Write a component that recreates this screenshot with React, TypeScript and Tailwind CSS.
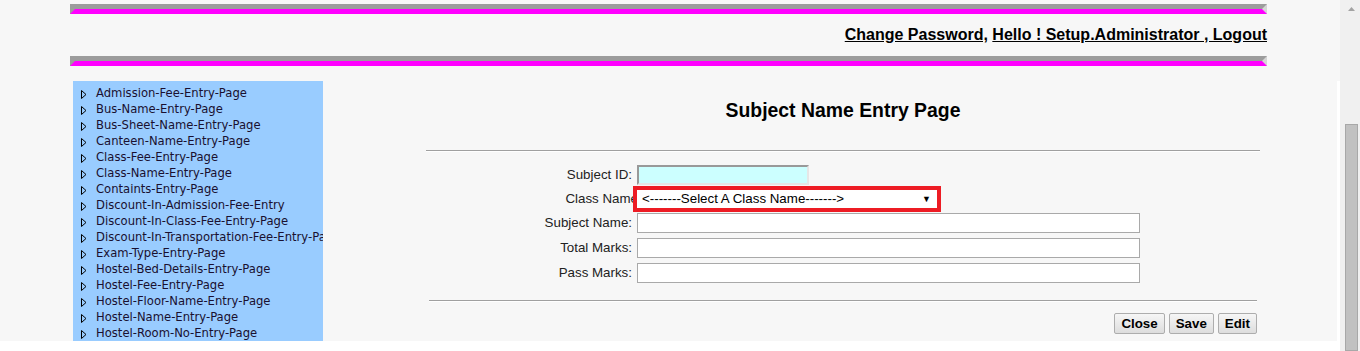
import React from 'react';

const menuItems = [
  'Admission-Fee-Entry-Page',
  'Bus-Name-Entry-Page',
  'Bus-Sheet-Name-Entry-Page',
  'Canteen-Name-Entry-Page',
  'Class-Fee-Entry-Page',
  'Class-Name-Entry-Page',
  'Containts-Entry-Page',
  'Discount-In-Admission-Fee-Entry',
  'Discount-In-Class-Fee-Entry-Page',
  'Discount-In-Transportation-Fee-Entry-Page',
  'Exam-Type-Entry-Page',
  'Hostel-Bed-Details-Entry-Page',
  'Hostel-Fee-Entry-Page',
  'Hostel-Floor-Name-Entry-Page',
  'Hostel-Name-Entry-Page',
  'Hostel-Room-No-Entry-Page',
];

function Bar() {
  return (
    <div className="h-[10px] border-t-[5px] border-l-[5px] border-r-[5px] border-b-[5px] border-t-[#9c9c9c] border-l-[#9c9c9c] border-r-[#d6d6d6] border-b-[#ff00ff]" />
  );
}

function Arrow() {
  return (
    <svg width="6" height="9" viewBox="0 0 6 9" className="shrink-0">
      <path d="M0.5 0.5 L5 4.5 L0.5 8.5 Z" fill="none" stroke="#000" strokeWidth="1" />
    </svg>
  );
}

function Sidebar() {
  return (
    <div className="w-[250px] shrink-0 bg-[#99ccff] pt-[5px] pl-[8px] overflow-hidden font-['DejaVu_Sans',sans-serif] text-[11.6px] text-[#1a1030]">
      {menuItems.map((item) => (
        <div key={item} className="flex items-center h-[16px] whitespace-nowrap">
          <Arrow />
          <span className="ml-[9px]">{item}</span>
        </div>
      ))}
    </div>
  );
}

function Row({ label, children }: { label: string; children: React.ReactNode }) {
  return (
    <>
      <div className="text-right pr-[5px] leading-[20px] self-center">{label}</div>
      <div className="flex items-center">{children}</div>
    </>
  );
}

function EntryForm() {
  const textInput = 'h-[20px] w-[503px] bg-white border border-[#a9a9a9] outline-none';
  return (
    <div className="w-[834px] ml-[103px] font-['Liberation_Sans',Arial,sans-serif] text-[#222]">
      <h1 className="mt-[18px] text-center text-[19.4px] font-bold leading-[23px] text-black">
        Subject Name Entry Page
      </h1>
      <div className="mt-[28px] border-t border-t-[#a0a0a0] border-b border-b-white" />

      <div className="mt-[13px] grid grid-cols-[211px_1fr] gap-y-[5px] text-[13.33px]">
        <Row label="Subject ID:">
          <input
            type="text"
            className="h-[20px] w-[172px] bg-[#ccffff] border-2 border-t-[#999] border-l-[#999] border-r-[#e6e6e6] border-b-[#e6e6e6] outline-none"
          />
        </Row>
        <div className="text-right leading-[18px] self-center -mr-[1px]">Class Name</div>
        <div className="flex items-center">
          <div className="h-[18px] w-[300px] bg-white outline-[4px] outline-solid outline-[#ed1c24] flex items-center justify-between pl-[5px] pr-[6px] text-[13.33px] text-black leading-none">
            <span>&lt;-------Select A Class Name-------&gt;</span>
            <span className="text-[9px]">▼</span>
          </div>
        </div>
        <Row label="Subject Name:">
          <input type="text" className={textInput} />
        </Row>
        <Row label="Total Marks:">
          <input type="text" className={textInput} />
        </Row>
        <Row label="Pass Marks:">
          <input type="text" className={textInput} />
        </Row>
      </div>

      <div className="mt-[17px] mx-[3px] border-t border-t-[#a0a0a0] border-b border-b-white" />

      <div className="mt-[11px] mr-[3px] flex justify-end gap-[4px] text-[13.33px] font-bold text-black">
        {['Close', 'Save', 'Edit'].map((b) => (
          <button
            key={b}
            className="h-[21px] px-[6px] leading-[19px] rounded-[2px] border border-[#adadad] bg-gradient-to-b from-[#f6f6f6] to-[#dddddd]"
          >
            {b}
          </button>
        ))}
      </div>
    </div>
  );
}

function Scrollbar() {
  return (
    <div className="w-[20px] h-[351px] bg-[#f0f0f0] flex flex-col items-center">
      <div className="h-[17px] w-full flex items-center justify-center pl-[3px]">
        <svg width="7" height="4" viewBox="0 0 7 4">
          <path d="M0 4 L3.5 0 L7 4 Z" fill="#a3a3a3" />
        </svg>
      </div>
      <div className="mt-[107px] ml-[3px] w-[13px] flex-1 bg-[#c1c1c1] border border-[#a8a8a8]" />
    </div>
  );
}

export default function App() {
  return (
    <div className="flex h-[351px] w-[1360px] overflow-hidden bg-white font-['Liberation_Sans',Arial,sans-serif]">
      <div className="w-[1340px] shrink-0">
        <div className="h-[81px] bg-[#f7f7f7] px-[70px] pt-[4px]">
          <div className="w-[1197px]">
            <Bar />
            <div className="h-[42px] pt-[12px] text-right text-[16px] font-bold leading-[18px] text-black">
              <a href="#" className="underline">Change Password,</a>{' '}
              <a href="#" className="underline">Hello ! Setup.Administrator , Logout</a>
            </div>
            <Bar />
          </div>
        </div>
        <div className="h-[260px] w-[1337px] bg-[#f7f7f7] overflow-hidden flex pl-[73px]">
          <Sidebar />
          <EntryForm />
        </div>
      </div>
      <Scrollbar />
    </div>
  );
}
